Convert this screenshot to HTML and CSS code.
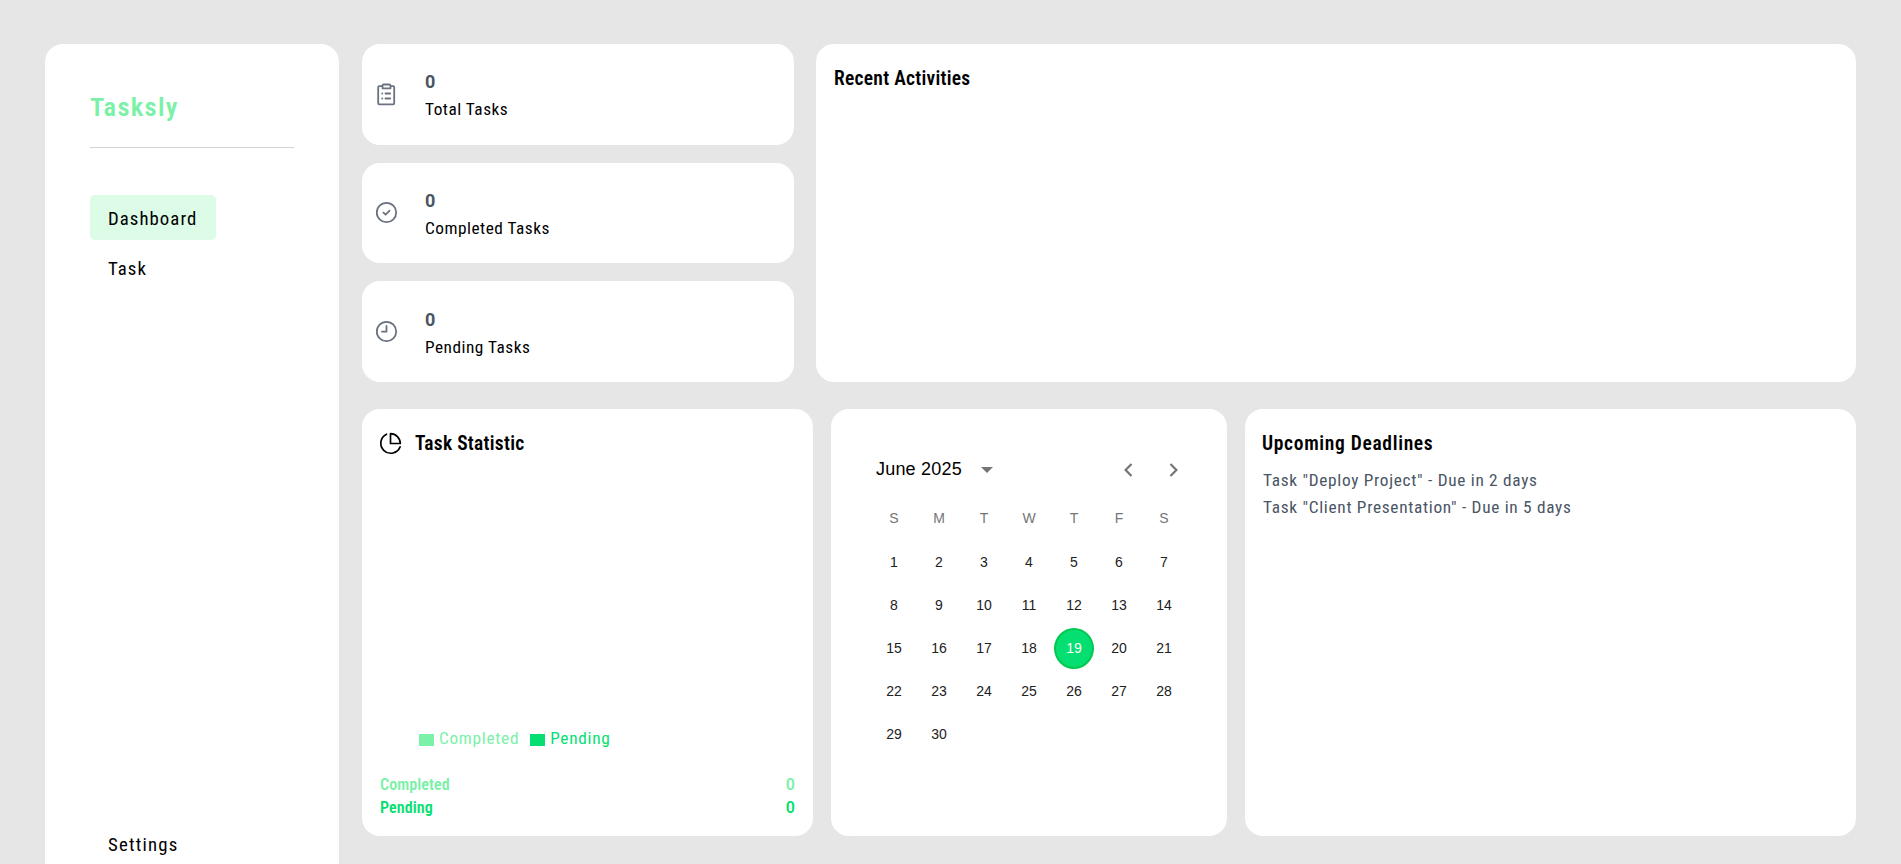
FILE: index.html
```
<!DOCTYPE html>
<html lang="en">
<head>
<meta charset="utf-8">
<title>Tasksly</title>
<link rel="stylesheet" href="styles.css">
</head>
<body>
<div class="app">
  <aside class="sidebar">
    <h1 class="brand">Tasksly</h1>
    <hr class="divider">
    <nav class="nav">
      <a class="nav-link active">Dashboard</a>
      <a class="nav-link">Task</a>
    </nav>
    <a class="nav-link settings">Settings</a>
  </aside>
  <main class="main">
    <div class="top-row">
      <div class="stats">
        <section class="card stat">
          <svg class="icon" viewBox="0 0 27 27" fill="none"><path d="M9.500 5.200H6.200q-1 0-1 1V22.300q0 1 1 1H20.200q1 0 1-1V6.200q0-1-1-1H17.500M9.500 4.700q0-1.200 1.200-1.200h5.600q1.200 0 1.200 1.200v2.600H9.500zM9.200 12.500h.1M12.500 12.500h4.700M9.200 17.500h.1M12.500 17.500h4.700"/></svg>
          <div><p class="count">0</p><p class="label">Total Tasks</p></div>
        </section>
        <section class="card stat">
          <svg class="icon" viewBox="0 0 27 27" fill="none"><circle cx="13.500" cy="13.500" r="9.700"/><path d="M10.400 13.600l2.200 2.100 4-4"/></svg>
          <div><p class="count">0</p><p class="label">Completed Tasks</p></div>
        </section>
        <section class="card stat">
          <svg class="icon" viewBox="0 0 27 27" fill="none"><circle cx="13.500" cy="13.500" r="9.700"/><path d="M13.500 8v5.700H9"/></svg>
          <div><p class="count">0</p><p class="label">Pending Tasks</p></div>
        </section>
      </div>
      <section class="card panel"><h2 class="title">Recent Activities</h2></section>
    </div>
    <div class="bottom-row">
      <section class="card panel statistic">
        <div class="heading">
          <svg class="pie" viewBox="0 0 27 27" fill="none"><path d="M9.500 4.200A10 10 0 1 0 23.100 16.900M13.500 3.700V13.500H23.300A9.800 9.800 0 0 0 13.500 3.700z"/></svg>
          <h2 class="title">Task Statistic</h2>
        </div>
        <div class="chart"></div>
        <div class="legend">
          <span class="key completed"><i class="swatch"></i>Completed</span>
          <span class="key pending"><i class="swatch"></i>Pending</span>
        </div>
        <div class="total completed"><span>Completed</span><span class="amount">0</span></div>
        <div class="total pending"><span>Pending</span><span class="amount">0</span></div>
      </section>
      <section class="card calendar">
        <header class="month">
          <span class="month-name">June 2025</span>
          <svg class="caret" viewBox="0 0 12 6"><path d="M0 0h12L6 6z"/></svg>
          <svg class="chevron prev" viewBox="0 0 9 14" fill="none"><path d="M7.500 1L1.600 7l5.900 6"/></svg>
          <svg class="chevron" viewBox="0 0 9 14" fill="none"><path d="M1.500 1l5.900 6-5.900 6"/></svg>
        </header>
        <div class="weekdays"><span>S</span><span>M</span><span>T</span><span>W</span><span>T</span><span>F</span><span>S</span></div>
        <div class="days">
          <span>1</span><span>2</span><span>3</span><span>4</span><span>5</span><span>6</span><span>7</span>
          <span>8</span><span>9</span><span>10</span><span>11</span><span>12</span><span>13</span><span>14</span>
          <span>15</span><span>16</span><span>17</span><span>18</span><span class="today">19</span><span>20</span><span>21</span>
          <span>22</span><span>23</span><span>24</span><span>25</span><span>26</span><span>27</span><span>28</span>
          <span>29</span><span>30</span>
        </div>
      </section>
      <section class="card panel">
        <h2 class="title upcoming">Upcoming Deadlines</h2>
        <ul class="deadlines">
          <li>Task "Deploy Project" - Due in 2 days</li>
          <li>Task "Client Presentation" - Due in 5 days</li>
        </ul>
      </section>
    </div>
  </main>
</div>
</body>
</html>
```
FILE: styles.css
```
* { box-sizing: border-box; margin: 0; padding: 0; }
body { height: 864px; overflow: hidden; background: #e6e6e6; color: #000; font-family: Roboto, "Open Sans", sans-serif; font-stretch: 75%; }
.app { display: flex; gap: 23px; height: 864px; padding: 44px 45px 0; }
.sidebar { width: 294px; height: 820px; flex: none; display: flex; flex-direction: column; align-items: flex-start; padding: 45px 45px 0; background: #fff; border-radius: 18px 18px 0 0; }
.brand { font-size: 26.5px; line-height: 36px; font-weight: 600; letter-spacing: 1.3px; color: #7bf1a8; }
.divider { width: 100%; height: 1px; border: 0; background: #d1d5dc; margin: 22px 0 47px; }
.nav { display: flex; flex-direction: column; align-items: flex-start; gap: 5px; }
.nav-link { height: 45px; padding: 2px 18px 0; font-size: 18.8px; line-height: 45px; letter-spacing: 1.05px; border-radius: 5px; }
.active { width: 126px; background: #dcfce7; }
.settings { height: 43px; margin-top: auto; letter-spacing: 1.2px; }
.main { flex: 1; display: flex; flex-direction: column; gap: 27px; }
.card { background: #fff; border-radius: 18px; }
.panel { padding: 18px; }
.top-row { display: grid; grid-template-columns: 432px 1fr; gap: 22px; height: 338px; }
.stats { display: grid; grid-template-rows: repeat(3, 1fr); gap: 18px; }
.stat { display: flex; align-items: center; gap: 25px; padding-left: 11px; }
.icon { width: 27px; height: 27px; stroke: #6a7282; stroke-width: 1.8; stroke-linecap: round; stroke-linejoin: round; }
.stat div { padding-top: 3px; }
.count { font-size: 18px; line-height: 27px; font-weight: 700; font-stretch: 100%; color: #4a5565; }
.label { font-size: 17.3px; line-height: 28px; letter-spacing: .5px; }
.title { padding-top: 2px; font-size: 19.5px; line-height: 30px; font-weight: 600; letter-spacing: .27px; }
.upcoming { margin-left: -1px; letter-spacing: .68px; }
.bottom-row { display: grid; grid-template-columns: 451px 396px 1fr; gap: 18px; height: 427px; }
.statistic { display: flex; flex-direction: column; }
.heading { display: flex; align-items: center; gap: 11px; }
.pie { width: 27px; height: 27px; margin-left: -3px; stroke: #000; stroke-width: 1.7; stroke-linecap: round; stroke-linejoin: round; }
.chart { flex: 1; }
.legend { display: flex; gap: 11px; margin: 0 0 20px 39px; font-size: 17.3px; line-height: 27px; letter-spacing: .7px; }
.key { display: flex; align-items: center; gap: 5px; }
.swatch { width: 15px; height: 12px; margin-top: 3px; background: currentColor; }
.completed { color: #7bf1a8; }
.pending { color: #05df72; }
.total { display: flex; justify-content: space-between; padding-top: 1px; margin-bottom: -1px; font-size: 16px; line-height: 23px; font-weight: 600; letter-spacing: .1px; }
.amount { font-stretch: 100%; }
.calendar { padding: 41px 40px; font-family: "Liberation Sans", Arial, sans-serif; font-stretch: 100%; }
.month { display: flex; align-items: center; height: 39px; padding: 0 9px 0 5px; font-size: 18px; }
.month-name { letter-spacing: .2px; }
.caret { width: 12px; height: 6px; margin-left: 19px; fill: #757575; }
.chevron { width: 9px; height: 14px; stroke: #757575; stroke-width: 2.2; }
.prev { margin: 0 36px 0 auto; }
.weekdays, .days { display: grid; grid-template-columns: repeat(7, 45px); font-size: 14px; text-align: center; margin-left: .5px; }
.weekdays { margin-top: 7px; line-height: 45px; color: #757575; }
.days { grid-auto-rows: 43px; line-height: 43px; color: #212121; }
.today { width: 40px; height: 41px; margin: 1px auto; line-height: 37px; border: 2px solid #00c950; border-radius: 50%; background: #05df72; color: #fff; }
.deadlines { list-style: none; margin: 8px 0 0; font-size: 17.3px; line-height: 27px; letter-spacing: .7px; color: #4a5565; }
```
